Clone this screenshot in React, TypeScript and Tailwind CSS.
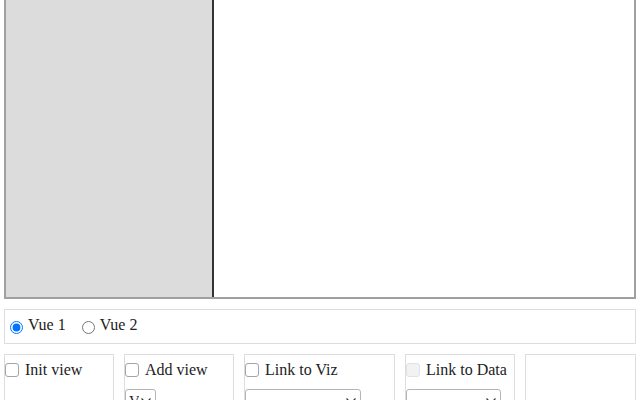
import React from "react";

function Select({ w, text }: { w: string; text?: string }) {
  return (
    <div className={`relative mt-[7px] h-[24px] ${w}`}>
      <select className="appearance-none w-full h-full border border-[#b5b5b5] rounded-[3px] bg-white pl-[3px] pr-[16px] text-[15px] text-[#222] overflow-hidden">
        <option>{text ?? ""}</option>
      </select>
      <svg
        className="pointer-events-none absolute right-[5px] top-[9px]"
        width="10"
        height="6"
        viewBox="0 0 10 6"
        fill="none"
        stroke="#333"
        strokeWidth="1.2"
      >
        <path d="M0.5 0.5 L5 5 L9.5 0.5" />
      </svg>
    </div>
  );
}

function Check({ label, disabled }: { label: string; disabled?: boolean }) {
  return (
    <label className="flex items-center">
      <input
        type="checkbox"
        disabled={disabled}
        className={
          disabled
            ? "appearance-none w-[14px] h-[14px] border border-[#e2e2e2] bg-[#f2f2f2] rounded-[3px]"
            : "appearance-none w-[14px] h-[14px] border border-[#a5a5a5] bg-white rounded-[3px]"
        }
      />
      <span className="ml-[6px]">{label}</span>
    </label>
  );
}

export default function App() {
  return (
    <div className="w-[640px] h-[400px] overflow-hidden bg-white text-[16px] text-[#222] font-['Liberation_Serif','DejaVu_Serif',serif]">
      <div className="mx-[4px] flex h-[299px] border-x-2 border-b-2 border-[#a0a0a0]">
        <div className="w-[208px] bg-[#dcdcdc] border-r-2 border-[#333]" />
        <div className="flex-1 bg-white" />
      </div>

      <div className="mx-[4px] mt-[10px] h-[35px] border border-[#ddd] flex items-center">
        <label className="flex items-center">
          <input type="radio" name="vue" defaultChecked className="ml-[5px] mt-[1px] w-[13px] h-[13px]" />
          <span className="ml-[5px] -mt-[4px]">Vue 1</span>
        </label>
        <label className="flex items-center ml-[16px]">
          <input type="radio" name="vue" className="w-[13px] h-[13px] mt-[1px]" />
          <span className="ml-[5px] -mt-[4px]">Vue 2</span>
        </label>
      </div>

      <div className="mx-[4px] mt-[10px] flex gap-[10px]">
        <div className="w-[110px] h-[80px] border border-[#ddd] pt-[3px]">
          <Check label="Init view" />
        </div>
        <div className="w-[110px] h-[80px] border border-[#ddd] pt-[3px]">
          <Check label="Add view" />
          <Select w="w-[31px]" text="Vue 1" />
        </div>
        <div className="w-[151px] h-[80px] border border-[#ddd] pt-[3px]">
          <Check label="Link to Viz" />
          <Select w="w-[116px]" />
        </div>
        <div className="w-[110px] h-[80px] border border-[#ddd] pt-[3px]">
          <Check label="Link to Data" disabled />
          <Select w="w-[95px]" />
        </div>
        <div className="flex-1 h-[80px] border border-[#ddd]" />
      </div>
    </div>
  );
}
